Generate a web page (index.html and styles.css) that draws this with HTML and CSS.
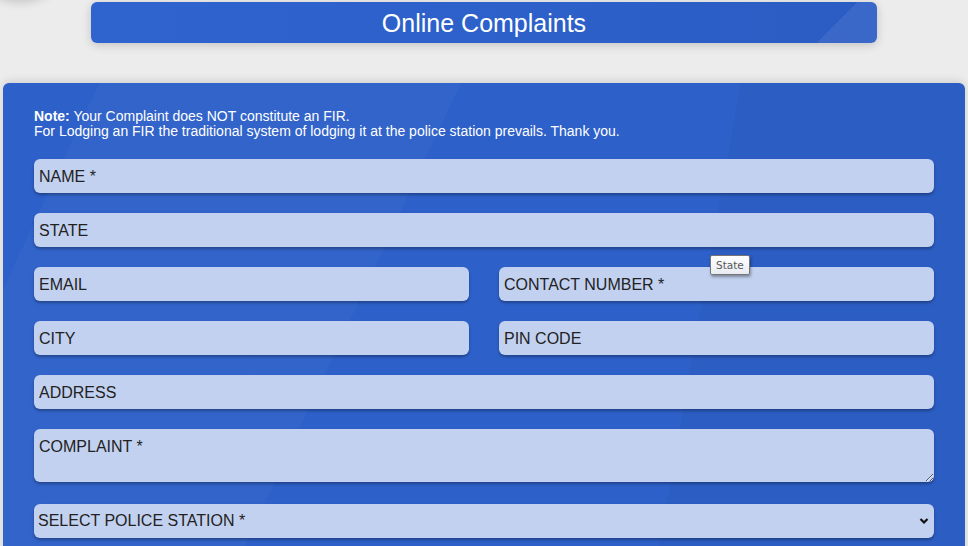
FILE: index.html
```html
<!DOCTYPE html>
<html lang="en">
<head>
<meta charset="utf-8">
<title>Online Complaints</title>
<link rel="stylesheet" href="styles.css">
</head>
<body>
<div class="page">
  <div class="logo-shadow"></div>
  <div class="title-bar"><h1>Online Complaints</h1></div>
  <form class="panel">
    <p class="note"><b>Note:</b> Your Complaint does NOT constitute an FIR.<br>For Lodging an FIR the traditional system of lodging it at the police station prevails. Thank you.</p>
    <div class="fields">
      <input class="field" type="text" placeholder="NAME *">
      <input class="field" type="text" placeholder="STATE">
      <div class="row">
        <input class="field" type="text" placeholder="EMAIL">
        <input class="field" type="text" placeholder="CONTACT NUMBER *">
      </div>
      <div class="row">
        <input class="field" type="text" placeholder="CITY">
        <input class="field" type="text" placeholder="PIN CODE">
      </div>
      <input class="field" type="text" placeholder="ADDRESS">
      <textarea class="field area" placeholder="COMPLAINT *"></textarea>
      <div class="select-wrap">
        <select class="field select"><option>SELECT POLICE STATION *</option></select>
        <svg class="chev" width="10" height="8" viewBox="0 0 10 8"><path d="M1.5 2 L5 5.5 L8.5 2" fill="none" stroke="#111" stroke-width="2.2"/></svg>
      </div>
    </div>
    <div class="tooltip">State</div>
  </form>
</div>
</body>
</html>
```

FILE: styles.css
```css
html, body {
  margin: 0;
  padding: 0;
  height: 100%;
  overflow: hidden;
}
body {
  background: #ececec;
  font-family: "Liberation Sans", Arial, sans-serif;
}
.page {
  position: relative;
  padding-top: 2px;
}
.logo-shadow {
  position: absolute;
  left: -20px;
  top: -60px;
  width: 80px;
  height: 60px;
  border-radius: 50%;
  background: #e6e6e6;
  box-shadow: 0 3px 8px rgba(0,0,0,0.15);
}
.title-bar {
  margin-left: 91px;
  width: 786px;
  height: 41px;
  border-radius: 6px;
  background:
    linear-gradient(135deg, transparent 0, transparent 92.7%, rgba(255,255,255,0.07) 92.7%),
    linear-gradient(90deg, #2f63ce 0%, #2d60c9 55%, #2b5cc4 100%);
  box-shadow: 0 2px 10px rgba(0,0,0,0.18);
  display: flex;
  align-items: center;
  justify-content: center;
}
.title-bar h1 {
  margin: 0;
  color: #fff;
  font-weight: normal;
  font-size: 25px;
  line-height: 28px;
}
.panel {
  position: relative;
  margin: 40px 3px 0 3px;
  width: 962px;
  height: 520px;
  box-sizing: border-box;
  border-radius: 6px 6px 0 0;
  padding: 26px 31px 0 31px;
  background:
    linear-gradient(115deg, transparent 0, transparent 8%, rgba(255,255,255,0.025) 8%, rgba(255,255,255,0.025) 38%, transparent 38%),
    linear-gradient(100deg, transparent 0, transparent 70%, rgba(0,0,0,0.03) 70%),
    #2d60c9;
  box-shadow: 0 -2px 8px rgba(0,0,0,0.12);
}
.note {
  margin: 0 0 20px 0;
  color: #fff;
  font-size: 14px;
  line-height: 15px;
}
.note b { font-weight: bold; }
.fields {
  display: flex;
  flex-direction: column;
  gap: 20px;
}
.row {
  display: grid;
  grid-template-columns: 1fr 1fr;
  gap: 30px;
}
.field {
  display: block;
  width: 100%;
  box-sizing: border-box;
  height: 34px;
  border: 0;
  border-radius: 6px;
  padding: 9px 5px 7px 5px;
  background: #c2d1f0;
  color: #222;
  font-family: "Liberation Sans", Arial, sans-serif;
  font-size: 16px;
  line-height: 18px;
  box-shadow: 0 2px 3px rgba(0,0,0,0.3);
  outline: none;
}
.field::placeholder {
  color: #222;
  opacity: 1;
}
.area {
  height: 53px;
  margin-bottom: 2px;
  resize: vertical;
}
.select-wrap {
  position: relative;
}
.select {
  appearance: none;
  -webkit-appearance: none;
  padding: 8px 4px 8px 4px;
}
.chev {
  position: absolute;
  right: 5px;
  top: 13px;
}
.tooltip {
  position: absolute;
  left: 707px;
  top: 172px;
  padding: 2px 5px;
  font-family: "DejaVu Sans", sans-serif;
  font-size: 10.5px;
  line-height: 14px;
  color: #575757;
  background: linear-gradient(#ffffff, #e8ecf2);
  border: 1px solid #767676;
  border-radius: 2px;
  box-shadow: 1px 2px 3px rgba(0,0,0,0.35);
}
```
